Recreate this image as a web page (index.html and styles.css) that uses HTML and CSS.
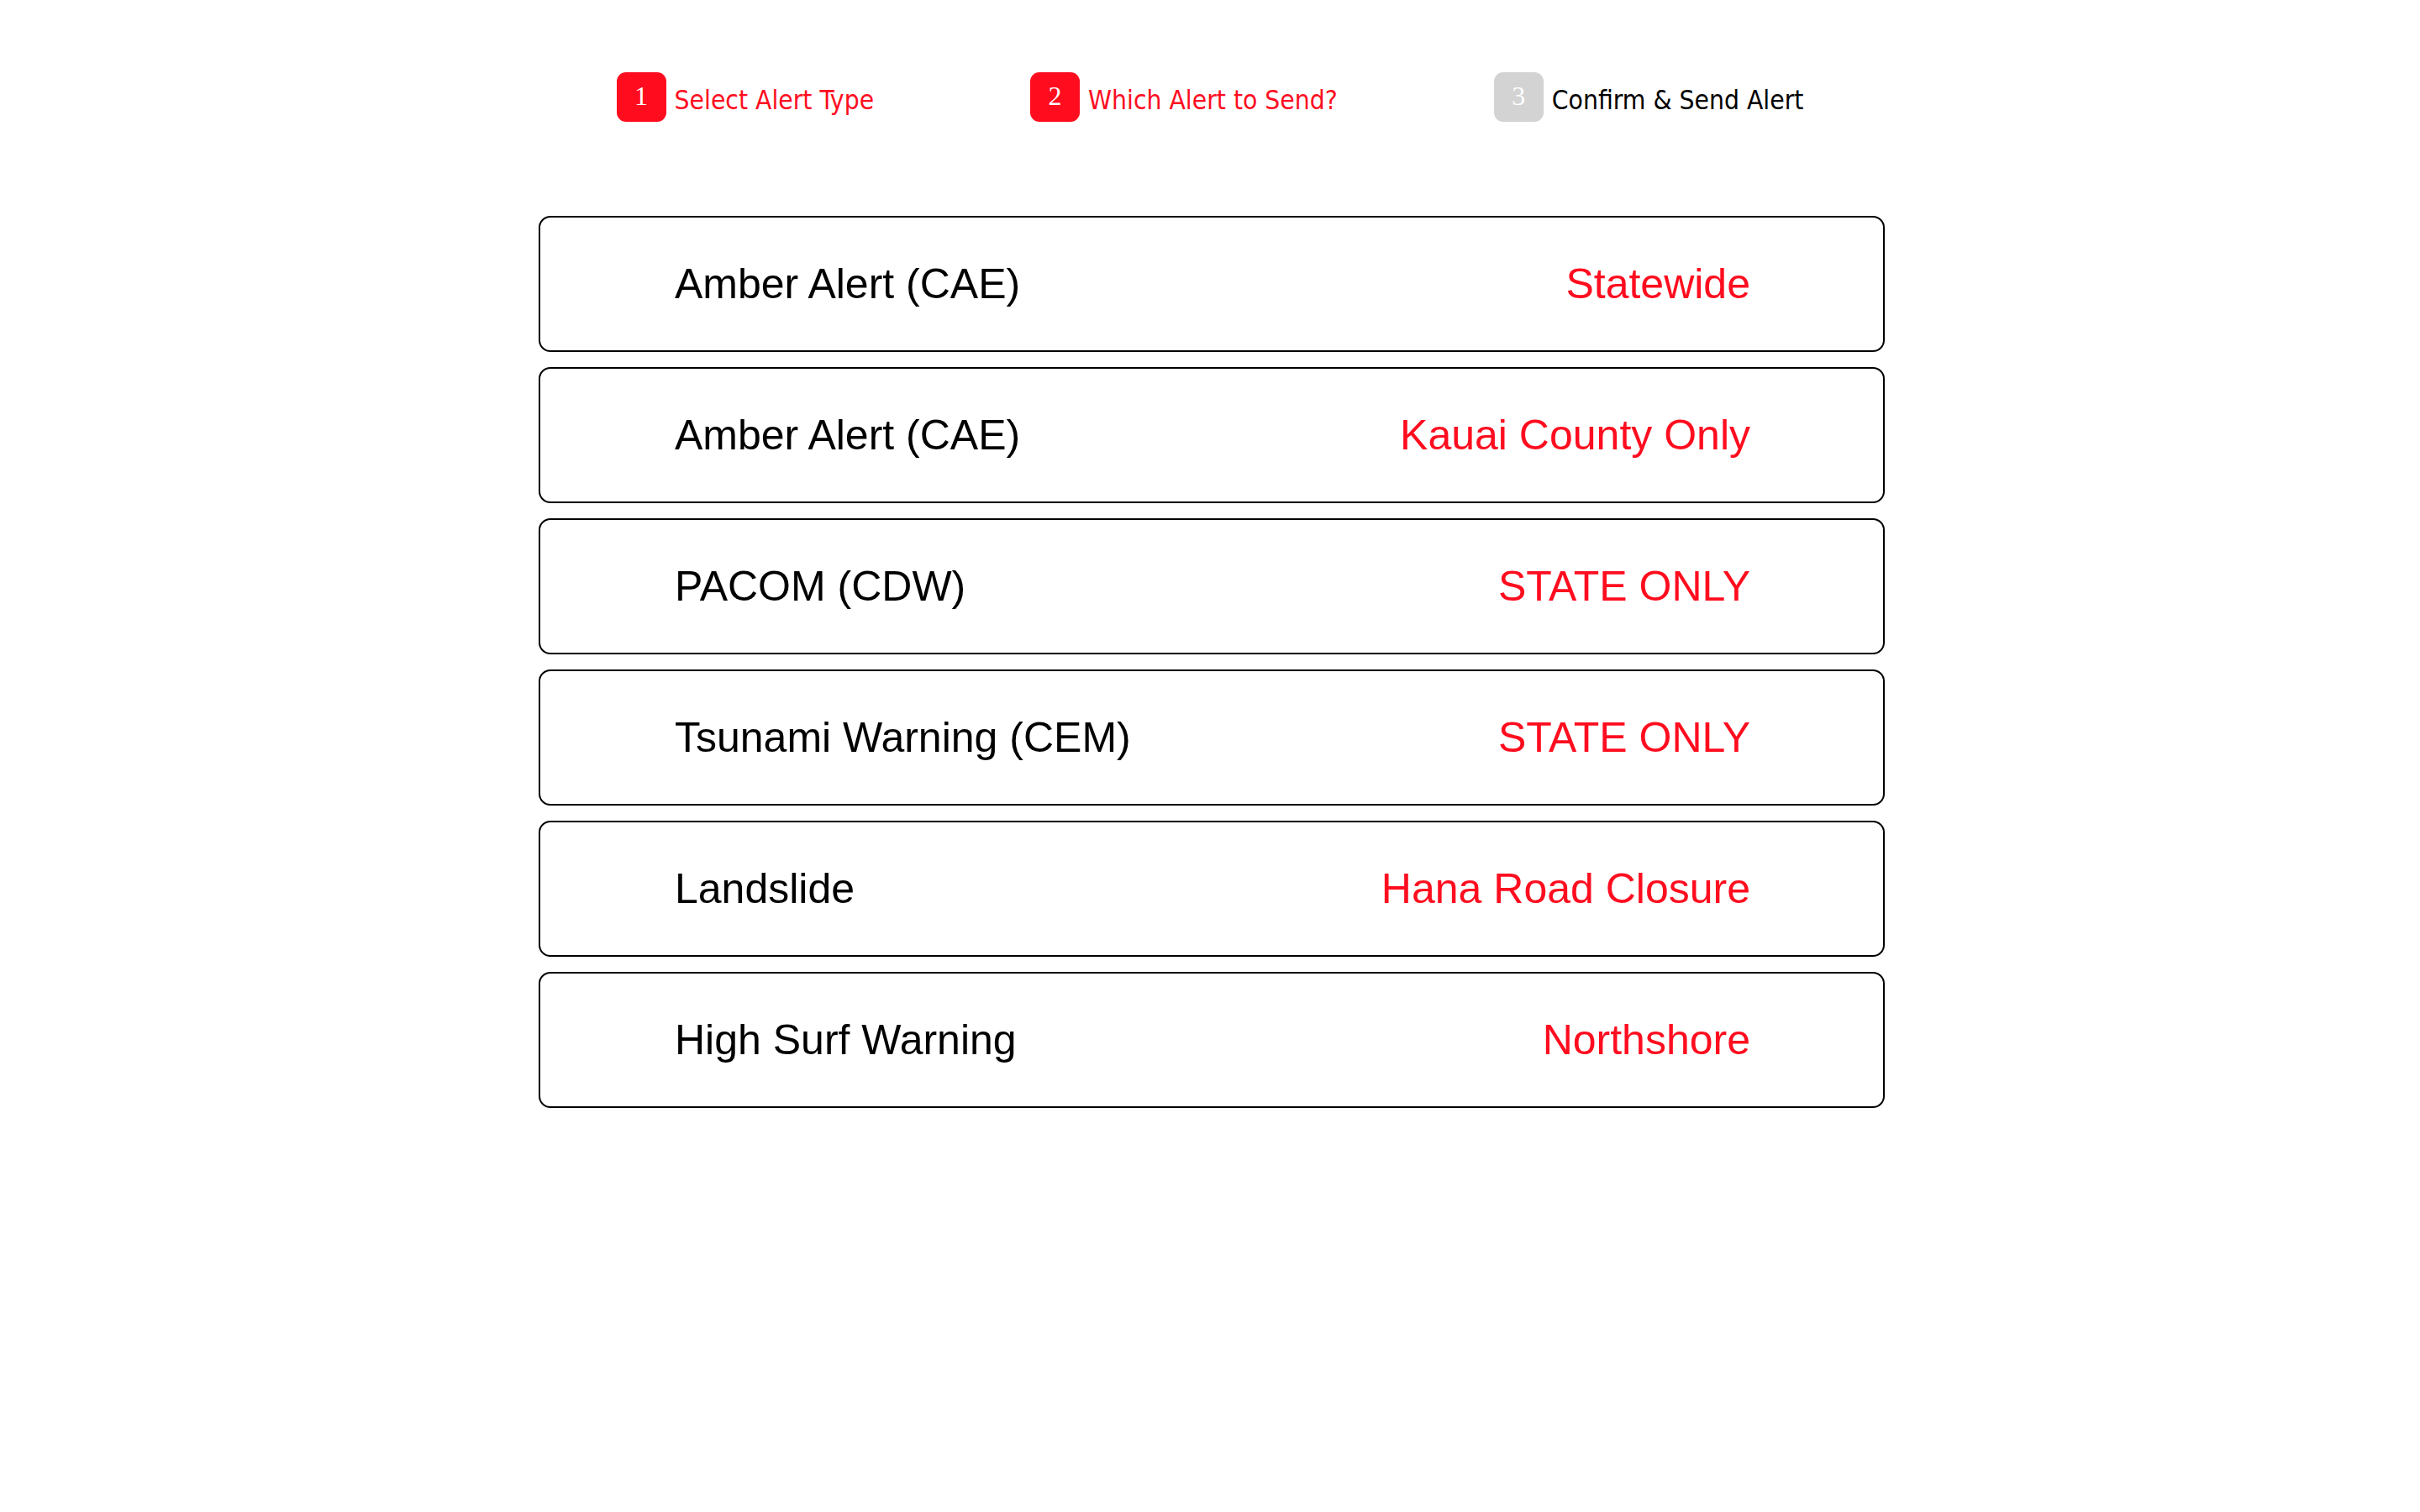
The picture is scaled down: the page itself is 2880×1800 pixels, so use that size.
FILE: index.html
```html
<!DOCTYPE html>
<html>
<head>
<meta charset="utf-8">
<link rel="stylesheet" href="styles.css">
</head>
<body>
<div class="steps">
  <div class="step active"><span class="badge">1</span><span class="label">Select Alert Type</span></div>
  <div class="step active"><span class="badge">2</span><span class="label">Which Alert to Send?</span></div>
  <div class="step pending"><span class="badge">3</span><span class="label">Confirm &amp; Send Alert</span></div>
</div>
<div class="list">
  <div class="card"><span class="name">Amber Alert (CAE)</span><span class="scope">Statewide</span></div>
  <div class="card"><span class="name">Amber Alert (CAE)</span><span class="scope">Kauai County Only</span></div>
  <div class="card"><span class="name">PACOM (CDW)</span><span class="scope">STATE ONLY</span></div>
  <div class="card"><span class="name">Tsunami Warning (CEM)</span><span class="scope">STATE ONLY</span></div>
  <div class="card"><span class="name">Landslide</span><span class="scope">Hana Road Closure</span></div>
  <div class="card"><span class="name">High Surf Warning</span><span class="scope">Northshore</span></div>
</div>
</body>
</html>
```
FILE: styles.css
```css
html, body {
  margin: 0;
  padding: 0;
  background: #ffffff;
}
body {
  font-family: "Liberation Sans", Arial, sans-serif;
}
.steps {
  display: flex;
  justify-content: center;
  align-items: center;
  gap: 186px;
  padding-top: 86px;
  height: 59px;
}
.step {
  display: flex;
  align-items: center;
  gap: 10px;
  height: 59px;
}
.badge {
  width: 59px;
  height: 59px;
  border-radius: 11px;
  display: flex;
  align-items: center;
  justify-content: center;
  color: #ffffff;
  font-family: "Liberation Serif", "Times New Roman", serif;
  font-size: 32px;
  padding-bottom: 3px;
  box-sizing: border-box;
}
.label {
  font-family: "DejaVu Sans Condensed", "DejaVu Sans", sans-serif;
  font-stretch: condensed;
  font-size: 31.5px;
  line-height: 59px;
  height: 59px;
  position: relative;
  top: 4px;
}
.active .badge { background: #ff0d1f; }
.active .label { color: #ff0d1f; }
.pending .badge { background: #d3d3d3; }
.pending .label { color: #000000; }
.list {
  width: 1602px;
  margin: 112px 0 0 calc(50% - 799px);
  display: flex;
  flex-direction: column;
  gap: 18px;
}
.card {
  height: 162px;
  box-sizing: border-box;
  border: 2px solid #000000;
  border-radius: 14px;
  padding: 0 158px 0 160px;
  display: flex;
  align-items: center;
  justify-content: space-between;
  font-size: 50px;
}
.name { color: #000000; }
.scope { color: #ff0d1f; }
```
